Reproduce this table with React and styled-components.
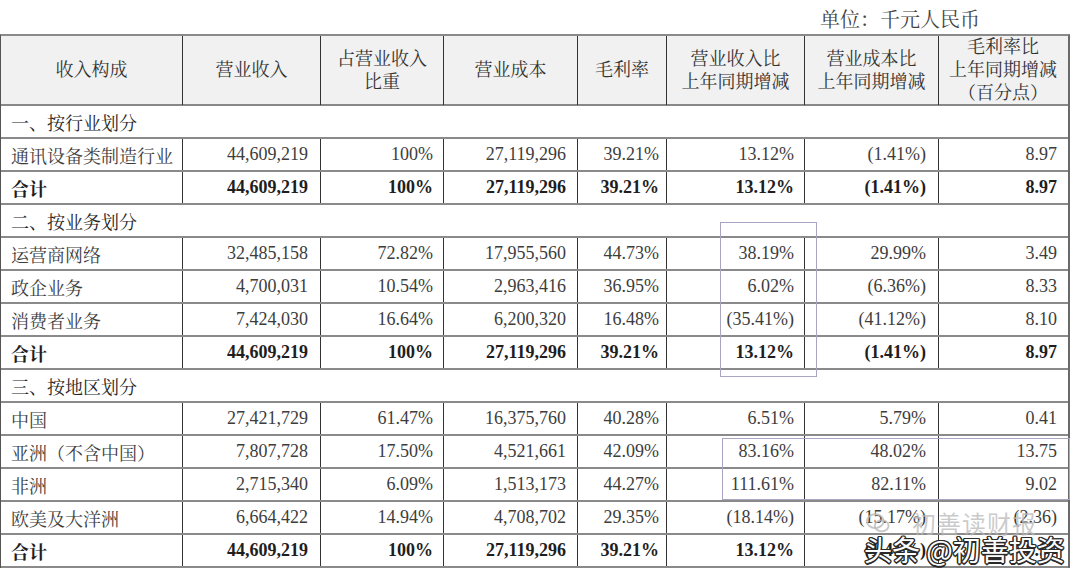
import styled, { createGlobalStyle } from 'styled-components'

const GlobalStyle = createGlobalStyle`
  html, body { margin: 0; padding: 0; background: #fff; }
  body {
    font-family: "Liberation Serif", "Noto Serif CJK SC", "Noto Sans CJK SC", serif;
    color: #3d3d3d;
  }
`

const COLS = '181px 138px 123px 134px 89px 138px 134px 129px'

const Page = styled.div`
  position: relative;
  width: 1080px;
  height: 575px;
  overflow: hidden;
`
const UnitBar = styled.div`
  height: 34px;
  display: flex;
  justify-content: flex-end;
  align-items: flex-end;
  padding-right: 100px;
  font-size: 20px;
  line-height: 28px;
  color: #444;
`
const Table = styled.div`
  width: 1067px;
  border-top: 2px solid #8a8a8a;
  border-left: 1px solid #555;
  border-right: 2px solid #6a6a6a;
`
const HeadRow = styled.div`
  display: grid;
  grid-template-columns: ${COLS};
  height: 70px;
  box-sizing: border-box;
  background: #f1f1f1;
  border-bottom: 2px solid #888;
`
const HeadCell = styled.div`
  display: flex;
  align-items: center;
  justify-content: center;
  text-align: center;
  font-size: 18px;
  line-height: 23px;
  color: #333;
  white-space: pre-line;
  border-left: ${p => (p.first ? 'none' : '1px solid #333')};
`
const Row = styled.div`
  display: grid;
  grid-template-columns: ${COLS};
  height: 33px;
  box-sizing: border-box;
  border-bottom: 2px solid #8a8a8a;
  font-weight: ${p => (p.bold ? 700 : 400)};
  color: ${p => (p.bold ? '#1e1e1e' : '#3d3d3d')};
`
const Cell = styled.div`
  display: flex;
  align-items: center;
  justify-content: ${p => (p.first ? 'flex-start' : 'flex-end')};
  padding: ${p => (p.first ? '0 0 0 10px' : `0 ${p.pr || 10}px 0 0`)};
  font-size: 18px;
  white-space: nowrap;
  border-left: ${p => (p.first ? 'none' : '1px solid #333')};
`
const SectionRow = styled.div`
  height: 33px;
  box-sizing: border-box;
  display: flex;
  align-items: center;
  padding-left: 10px;
  font-size: 18px;
  color: #262626;
  border-bottom: 2px solid #8a8a8a;
`
const Mark = styled.div`
  position: absolute;
  box-sizing: border-box;
  border: 1.5px solid #aaa4c0;
  left: ${p => p.x}px;
  top: ${p => p.y}px;
  width: ${p => p.w}px;
  height: ${p => p.h}px;
`
const FadedMark = styled.div`
  position: absolute;
  left: 866px;
  top: 505px;
  display: flex;
  align-items: center;
  gap: 22px;
  font-family: "Noto Sans CJK SC", sans-serif;
  font-size: 24px;
  color: rgba(185, 185, 185, 0.75);
  letter-spacing: 1px;
`
const Stamp = styled.div`
  position: absolute;
  left: 864px;
  top: 530px;
  font-family: "Noto Sans CJK SC", sans-serif;
  font-size: 28px;
  line-height: 38px;
  color: #fff;
  white-space: nowrap;
  text-shadow:
    -1px -1px 0 #2a2a2a, 1px -1px 0 #2a2a2a, -1px 1px 0 #2a2a2a, 1px 1px 0 #2a2a2a,
    0 -1.5px 0 #2a2a2a, 0 1.5px 0 #2a2a2a, -1.5px 0 0 #2a2a2a, 1.5px 0 0 #2a2a2a;
`

const HEAD = [
  '收入构成',
  '营业收入',
  '占营业收入\n比重',
  '营业成本',
  '毛利率',
  '营业收入比\n上年同期增减',
  '营业成本比\n上年同期增减',
  '毛利率比\n上年同期增减\n（百分点）',
]

const TOTAL = ['合计', '44,609,219', '100%', '27,119,296', '39.21%', '13.12%', '(1.41%)', '8.97']

const SECTIONS = [
  {
    title: '一、按行业划分',
    rows: [['通讯设备类制造行业', '44,609,219', '100%', '27,119,296', '39.21%', '13.12%', '(1.41%)', '8.97']],
  },
  {
    title: '二、按业务划分',
    rows: [
      ['运营商网络', '32,485,158', '72.82%', '17,955,560', '44.73%', '38.19%', '29.99%', '3.49'],
      ['政企业务', '4,700,031', '10.54%', '2,963,416', '36.95%', '6.02%', '(6.36%)', '8.33'],
      ['消费者业务', '7,424,030', '16.64%', '6,200,320', '16.48%', '(35.41%)', '(41.12%)', '8.10'],
    ],
  },
  {
    title: '三、按地区划分',
    rows: [
      ['中国', '27,421,729', '61.47%', '16,375,760', '40.28%', '6.51%', '5.79%', '0.41'],
      ['亚洲（不含中国）', '7,807,728', '17.50%', '4,521,661', '42.09%', '83.16%', '48.02%', '13.75'],
      ['非洲', '2,715,340', '6.09%', '1,513,173', '44.27%', '111.61%', '82.11%', '9.02'],
      ['欧美及大洋洲', '6,664,422', '14.94%', '4,708,702', '29.35%', '(18.14%)', '(15.17%)', '(2.36)'],
    ],
  },
]

// right padding per column, read off the reference
const PAD = [0, 12, 10, 11, 7, 10, 12, 10]

function DataRow({ cells, bold }) {
  return (
    <Row bold={bold}>
      {cells.map((c, i) => (
        <Cell key={i} first={i === 0} pr={PAD[i]}>{c}</Cell>
      ))}
    </Row>
  )
}

export default function App() {
  return (
    <Page>
      <GlobalStyle />
      <UnitBar>单位：千元人民币</UnitBar>
      <Table>
        <HeadRow>
          {HEAD.map((h, i) => (
            <HeadCell key={i} first={i === 0}>{h}</HeadCell>
          ))}
        </HeadRow>
        {SECTIONS.map(s => (
          <div key={s.title}>
            <SectionRow>{s.title}</SectionRow>
            {s.rows.map(r => <DataRow key={r[0]} cells={r} />)}
            <DataRow cells={TOTAL} bold />
          </div>
        ))}
      </Table>

      {/* annotation boxes drawn over the table */}
      <Mark x={720} y={222} w={97} h={155} />
      <Mark x={722} y={438} w={348} h={62} />

      <FadedMark>
        <svg width="24" height="22" viewBox="0 0 26 22">
          <ellipse cx="10" cy="9" rx="9" ry="7.5" fill="none" stroke="rgba(185,185,185,0.8)" strokeWidth="2" />
          <ellipse cx="17" cy="14" rx="7.5" ry="6" fill="none" stroke="rgba(185,185,185,0.8)" strokeWidth="2" />
        </svg>
        <span>初善读财报</span>
      </FadedMark>
      <Stamp>头条 @初善投资</Stamp>
    </Page>
  )
}
